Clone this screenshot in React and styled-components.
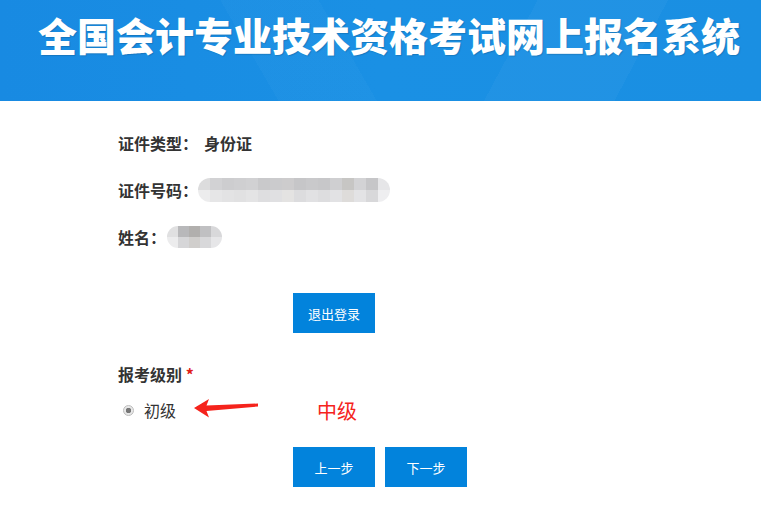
import React from "react";
import styled, { createGlobalStyle } from "styled-components";

const GlobalStyle = createGlobalStyle`
    body{
        margin: 0;
        background: #ffffff;
        font-family: "Noto Sans CJK SC", "Noto Sans", sans-serif;
    }
`;

const idShades = [
    ["#dcdcdd", "#ececed"],
    ["#d2d2d4", "#e6e6e7"],
    ["#cdcdcf", "#e3e3e4"],
    ["#cfcfd1", "#e1e1e2"],
    ["#d1d1d3", "#e4e4e5"],
    ["#c9c9cb", "#dedee0"],
    ["#cbcbcd", "#e0e0e2"],
    ["#cdcccd", "#e4e3e2"],
    ["#c6c6c8", "#dcdcde"],
    ["#c9c9cb", "#e1e1e3"],
    ["#c7c7c9", "#dddddf"],
    ["#cfcfd1", "#e2e2e4"],
    ["#c7c6c4", "#dedcda"],
    ["#d3d3d5", "#e3e3e5"],
    ["#c6c6c8", "#d8d8da"],
    ["#e6e6e8", "#eeeef0"],
];

const nameShades = [
    ["#e0e0e1", "#ececed"],
    ["#b8b8ba", "#d6d6d8"],
    ["#b1afad", "#d0cecc"],
    ["#c0c0c2", "#d8d8da"],
    ["#d8d8da", "#e6e6e8"],
];

export default function App(){
    return(
        <>
        <GlobalStyle/>
        <Header>
            <Title>全国会计专业技术资格考试网上报名系统</Title>
        </Header>
        <Page>
            <Info>
                <Row>
                    <Label>证件类型：</Label>
                    <Value>身份证</Value>
                </Row>
                <Row>
                    <Label>证件号码：</Label>
                    <Mosaic $width={192} $height={24} $offset={0}>
                        {idShades.map((s, i) => (
                            <Column key={i}><Cell $color={s[0]}/><Cell $color={s[1]}/></Column>
                        ))}
                    </Mosaic>
                </Row>
                <Row>
                    <Label>姓名：</Label>
                    <Mosaic $width={55} $height={22} $offset={1}>
                        {nameShades.map((s, i) => (
                            <Column key={i}><Cell $color={s[0]}/><Cell $color={s[1]}/></Column>
                        ))}
                    </Mosaic>
                </Row>
            </Info>
            <Logout>退出登录</Logout>
            <Section>
                <Label>报考级别 <Required>*</Required></Label>
                <RadioRow>
                    <Radio/>
                    <RadioText>初级</RadioText>
                    <Arrow width="66" height="21" viewBox="0 0 66 21">
                        <path d="M1 10 L16 1 L13.5 7.5 L65 5.5 L65 8.5 L13.5 13 L16 19.5 Z" fill="#f5231c"/>
                    </Arrow>
                    <Note>中级</Note>
                </RadioRow>
            </Section>
            <Actions>
                <Button>上一步</Button>
                <Button>下一步</Button>
            </Actions>
        </Page>
        </>
    )
}

const Header=styled.div`
    height: 101px;
    box-sizing: border-box;
    padding: 11px 0 0 38px;
    overflow: hidden;
    background:
        linear-gradient(118deg, rgba(255,255,255,0) 0%, rgba(255,255,255,0) 66%, rgba(255,255,255,0.03) 66%, rgba(255,255,255,0.03) 82%, rgba(255,255,255,0) 82%),
        linear-gradient(60deg, rgba(255,255,255,0) 34%, rgba(255,255,255,0.025) 34%, rgba(255,255,255,0.025) 46%, rgba(255,255,255,0) 46%),
        linear-gradient(90deg, #188ae2 0%, #1a90e4 50%, #1a8fe2 100%);
`
const Title=styled.h1`
    margin: 0;
    font-family: "Noto Sans CJK SC", sans-serif;
    font-weight: 900;
    font-size: 39px;
    line-height: 46px;
    letter-spacing: 0;
    color: #ffffff;
    text-shadow: 1px 1px 1px rgba(0,0,0,0.15);
    white-space: nowrap;
`
const Page=styled.div`
    padding: 30px 0 0 118px;
    display: flex;
    flex-direction: column;
`
const Info=styled.div`
    display: flex;
    flex-direction: column;
    gap: 23px;
`
const Row=styled.div`
    display: flex;
    align-items: center;
    height: 24px;
`
const Label=styled.div`
    font-size: 16px;
    font-weight: 700;
    line-height: 24px;
    color: #333333;
    white-space: nowrap;
`
const Value=styled.div`
    margin-left: 6px;
    font-size: 16px;
    font-weight: 700;
    color: #333333;
`
const Mosaic=styled.div`
    display: flex;
    width: ${p => p.$width}px;
    height: ${p => p.$height}px;
    margin-left: ${p => p.$offset}px;
    border-radius: ${p => p.$height / 2}px;
    overflow: hidden;
`
const Column=styled.div`
    flex: 1;
    display: flex;
    flex-direction: column;
`
const Cell=styled.div`
    flex: 1;
    background: ${p => p.$color};
`
const Button=styled.button`
    width: 82px;
    height: 40px;
    border: none;
    border-radius: 0;
    padding: 0;
    background-color: #0283dc;
    color: #ffffff;
    font-family: "Noto Sans CJK SC", sans-serif;
    font-size: 13px;
    cursor: pointer;
`
const Logout=styled(Button)`
    margin: 44px 0 0 175px;
`
const Section=styled.div`
    margin-top: 29px;
    display: flex;
    flex-direction: column;
    gap: 12px;
`
const Required=styled.span`
    color: #e0201a;
`
const RadioRow=styled.div`
    display: flex;
    align-items: center;
    height: 24px;
    padding-left: 5px;
`
const Radio=styled.span`
    box-sizing: border-box;
    width: 11px;
    height: 11px;
    border-radius: 50%;
    border: 1px solid #bdbdbd;
    background: radial-gradient(circle, #777777 0 2.5px, #e8e8e8 3px);
    margin-top: 1px;
`
const RadioText=styled.span`
    margin-left: 10px;
    font-size: 16px;
    color: #333333;
`
const Arrow=styled.svg`
    margin: -4px 0 0 17px;
`
const Note=styled.span`
    margin-left: 58px;
    font-size: 20px;
    font-weight: 400;
    color: #f5231c;
`
const Actions=styled.div`
    margin: 25px 0 0 175px;
    display: flex;
    gap: 10px;
`
